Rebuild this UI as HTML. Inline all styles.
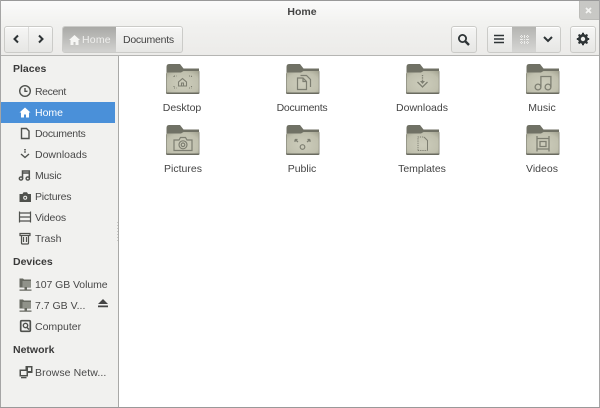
<!DOCTYPE html>
<html><head><meta charset="utf-8"><style>
*{box-sizing:border-box}
html,body{margin:0;padding:0;width:600px;height:408px;overflow:hidden;background:#fff}
body{font-family:"Liberation Sans",sans-serif;font-size:10.5px;color:#484848;position:relative}
.a{position:absolute}
.t{position:absolute;white-space:nowrap;line-height:14px}
.c{position:absolute;width:110px;text-align:center;line-height:14px;color:#444}
.btn{position:absolute;top:26px;height:27px;border:1px solid #cbcbc8;border-radius:3px;background:linear-gradient(#f6f6f5,#e6e6e4);box-shadow:0 1px 0 #fff inset}
.sep{position:absolute;top:27px;height:25px;width:1px;background:#dcdcda}
.act{position:absolute;top:27px;height:25px;background:linear-gradient(#a9a9a6,#d2d2d0)}
.h{position:absolute;left:13px;font-weight:bold;color:#3a3a3a;line-height:14px;font-size:10.5px}
svg{position:absolute;overflow:visible}
.i{filter:blur(.3px)}
</style></head><body>
<div class="a" style="left:0;top:0;width:600px;height:56px;background:linear-gradient(#fbfbfb 0,#f1f1ef 25px,#ecebe9 56px);border-bottom:1px solid #b5b5b3"></div>
<div class="a" style="left:0;top:0;width:600px;height:1px;background:#999"></div>
<div class="a" style="left:0;top:0;width:1px;height:408px;background:#a5a5a5"></div>
<div class="a" style="left:599px;top:0;width:1px;height:408px;background:#a5a5a5"></div>
<div class="a" style="left:0;top:407px;width:600px;height:1px;background:#999"></div>
<div class="t" style="left:2px;width:600px;text-align:center;top:5px;font-weight:bold;color:#444;font-size:10.5px">Home</div>
<div class="a" style="left:579px;top:1px;width:20px;height:19px;background:#c8c8c5;border-bottom-left-radius:3px;border-left:1px solid #bcbcb9;border-bottom:1px solid #bcbcb9"></div>
<svg class="i" style="left:0;top:0" width="600" height="56"><path d="M586 8l5 5M591 8l-5 5" stroke="#f4f4f2" stroke-width="1.800"/></svg>

<div class="btn" style="left:4px;width:49px"></div><div class="sep" style="left:28px"></div>
<svg class="i" style="left:0;top:0" width="60" height="56"><path d="M18 35.500l-3.500 3.500 3.500 3.500M39 35.500l3.500 3.500-3.500 3.500" fill="none" stroke="#2e3436" stroke-width="2"/></svg>

<div class="btn" style="left:62px;width:121px"></div>
<div class="act" style="left:63px;width:53px;border-radius:2px 0 0 2px"></div>
<svg class="i" style="left:69px;top:35px" width="11" height="10"><path d="M0 5L5.500 0 11 5 9.500 5 9.500 10 6.500 10 6.500 7 4.500 7 4.500 10 1.500 10 1.500 5Z" fill="#f6f6f4"/></svg>
<div class="t" style="left:82px;top:33px;color:#efefed;letter-spacing:.2px">Home</div>
<div class="t" style="left:123px;top:33px;color:#444;letter-spacing:-.25px">Documents</div>

<div class="btn" style="left:451px;width:26px"></div>
<svg class="i" style="left:457px;top:33px" width="14" height="14"><circle cx="5.500" cy="5.500" r="3.600" fill="none" stroke="#2e3436" stroke-width="1.800"/><path d="M8 8l4 4" stroke="#2e3436" stroke-width="2.400"/></svg>

<div class="btn" style="left:487px;width:74px"></div>
<div class="act" style="left:512px;width:24px;background:linear-gradient(#b4b4b1,#d6d6d4)"></div>
<svg class="i" style="left:0;top:0" width="600" height="56"><path d="M494 35.500h10M494 39h10M494 42.500h10" stroke="#2e3436" stroke-width="1.500"/><path d="M520 36.500h9M520 39.500h9M520 42.500h9M521.500 35v9M524.500 35v9M527.500 35v9" stroke="#eeeeec" stroke-width="1" stroke-dasharray="1 1"/><path d="M544 37l4 4 4-4" fill="none" stroke="#2e3436" stroke-width="2"/></svg>

<div class="btn" style="left:570px;width:26px"></div>
<svg class="i" style="left:576px;top:32px" width="14" height="14"><circle cx="7" cy="7" r="3.700" fill="none" stroke="#2e3436" stroke-width="2.600"/><path d="M7 .8v12.400M.8 7h12.400M2.600 2.600l8.800 8.800M11.400 2.600l-8.800 8.800" stroke="#2e3436" stroke-width="2"/><circle cx="7" cy="7" r="2.200" fill="#ededeb"/></svg>

<!-- sidebar -->
<div class="a" style="left:1px;top:56px;width:118px;height:351px;background:#f1f1ef;border-right:1px solid #a9a9a7"></div>
<div class="a" style="left:1px;top:102px;width:114px;height:21px;background:#4a90d9"></div>
<svg style="left:116px;top:222px" width="3" height="20"><path d="M1.500 0v20" stroke="#c8c8c6" stroke-dasharray="1 2"/></svg>

<div class="h" style="top:62px">Places</div>
<div class="t" style="left:35px;top:85px;letter-spacing:-.4px">Recent</div>
<div class="t" style="left:35px;top:106px;color:#fff">Home</div>
<div class="t" style="left:35px;top:127px;letter-spacing:-.3px">Documents</div>
<div class="t" style="left:35px;top:148px">Downloads</div>
<div class="t" style="left:35px;top:169px;letter-spacing:-.2px">Music</div>
<div class="t" style="left:35px;top:190px;letter-spacing:-.2px">Pictures</div>
<div class="t" style="left:35px;top:211px;letter-spacing:-.15px">Videos</div>
<div class="t" style="left:35px;top:232px">Trash</div>
<div class="h" style="top:255px">Devices</div>
<div class="t" style="left:35px;top:278px;letter-spacing:-.08px">107 GB Volume</div>
<div class="t" style="left:35px;top:299px">7.7 GB V...</div>
<div class="t" style="left:35px;top:320px">Computer</div>
<div class="h" style="top:343px">Network</div>
<div class="t" style="left:35px;top:366px;letter-spacing:.1px">Browse Netw...</div>

<svg class="i" style="left:0;top:0" width="120" height="408">
<g fill="none" stroke="#4f514d" stroke-width="1.400">
<circle cx="25" cy="91" r="5.300"/><path d="M25 88v3.300h2.500"/>
<path d="M21.500 128.500h5l2.500 2.500v7.500h-7.500z"/>
<path d="M25 149v4" stroke-width="1.600" stroke-dasharray="1.500 .7"/><path d="M21 154l4 3.500 4-3.500"/>
<path d="M22.500 178.500V171h6.800v7.500M22.500 173h6.800" stroke-width="1.500"/><ellipse cx="21" cy="178.500" rx="1.700" ry="1.600"/><ellipse cx="27.800" cy="178.500" rx="1.700" ry="1.600"/>
<path d="M19.500 211.500v11M30.500 211.500v11M19.500 213h11M19.500 221h11M19.500 217h11" stroke-width="1.200"/>
<path d="M21.500 235.500h7v7.500q0 1-1 1h-5q-1 0-1-1zM20 233.500h10v2H20zM23.500 237v5M26.500 237v5" stroke-width="1.200"/>
<rect x="20.700" y="320.700" width="9.600" height="10.600" rx="1" stroke-width="1.700"/><circle cx="25.500" cy="325.500" r="2.200"/><path d="M27 327.500l2 2"/>
</g>
<path d="M19.500 112.500l5.500-5 5.500 5h-1.500v5h-3v-3h-2v3h-3v-5z" fill="#fff"/>
<path d="M19.500 194h3l1-1.800h3.500l1 1.800h3v8h-11.500z" fill="#4f514d"/><circle cx="25.200" cy="197.800" r="2" fill="#f1f1ef"/><circle cx="25.200" cy="197.800" r="1" fill="#4f514d"/>
<g id="d1" fill="#676961"><path d="M19.500 278.500h3.500l1 1h7v8h-11.500z"/><path d="M22.500 281h8.500v6h-8.500z" fill="#90928a"/><path d="M24.500 287.500h2.500v2h-2.500zM19.500 289.500h12v1.200h-12z"/></g>
<use href="#d1" y="21"/>
<path d="M98 304l5-5 5 5zM98 305.500h10v1.800H98z" fill="#444"/>
<g fill="#4f514d"><path d="M25.500 366h7v7h-7z"/><path d="M19.500 369.500h8.500v7h-8.500z"/><path d="M21 371h5.500v4H21z" fill="#f1f1ef"/><path d="M28 367.500h3v3.500h-3z" fill="#f1f1ef"/><path d="M21 377h5.500v1.300H21z"/></g>
</svg>

<!-- folders -->
<svg width="0" height="0" style="left:0;top:0"><defs>
<radialGradient id="fb" cx=".5" cy=".55" r=".7"><stop offset="0" stop-color="#cdcdbc"/><stop offset=".7" stop-color="#c0c0ae"/><stop offset="1" stop-color="#a5a593"/></radialGradient>
<g id="f">
<path d="M.5 3Q.5 0 3 0h11l3.500 4.500H33v6H.5z" fill="#707165"/>
<path d="M0 9.500Q0 8.500 1.500 8.500H15l2.500-1.500H33.500v21.500q0 1.500-1.500 1.500H1.500Q0 30 0 28.500z" fill="url(#fb)"/>
<path d="M.4 9.500v19M33.100 7.500v21" stroke="#8d8e80" stroke-width=".8" fill="none"/>
<path d="M0 28.500h33.500v.3q0 1.200-1.500 1.200H1.500Q0 30 0 28.800z" fill="#6a6b60"/>
</g></defs></svg>

<svg class="i" style="left:166px;top:64px" width="34" height="31"><use href="#f"/><g fill="none" stroke="#7d7e71" stroke-width="1.100"><path d="M12.500 22v-4l4-3.500 4 3.500v4zM15.500 22v-3h2v3"/><path d="M8 12h2.500M23 12h2.500M8 24h2.500M23 24h2.500M8 12v2M25.500 12v2M8 22v2M25.500 22v2" stroke-dasharray="1 1"/></g></svg>
<svg class="i" style="left:286px;top:64px" width="34" height="31"><use href="#f"/><g fill="none" stroke="#7d7e71" stroke-width="1.200"><path d="M11.500 14h5.500l3.500 3.500v8h-9z"/><path d="M14.500 11.500h6l4 4v7.500"/><path d="M17 14v3.500h3.500"/></g></svg>
<svg class="i" style="left:406px;top:64px" width="34" height="31"><use href="#f"/><g fill="none" stroke="#7d7e71" stroke-width="1.300"><path d="M16.500 11v6" stroke-dasharray="1.300 1"/><path d="M11.500 18l5 5 5-5"/></g><path d="M14 17h5l-2.500 3z" fill="#7d7e71"/></svg>
<svg class="i" style="left:526px;top:64px" width="34" height="31"><use href="#f"/><g fill="none" stroke="#7d7e71" stroke-width="1.300"><circle cx="12" cy="23" r="2.900"/><circle cx="22" cy="23" r="2.900"/><path d="M14.900 23V12.500h10V23"/></g></svg>
<svg class="i" style="left:166px;top:125px" width="34" height="31"><use href="#f"/><g fill="none" stroke="#7d7e71" stroke-width="1.200"><path d="M8 15h5l1.500-2.500h5L21 15h5v10.500H8z"/><circle cx="17" cy="19.800" r="4"/><circle cx="17" cy="19.800" r="1.800"/></g></svg>
<svg class="i" style="left:286px;top:125px" width="34" height="31"><use href="#f"/><g fill="none" stroke="#7d7e71" stroke-width="1.200"><circle cx="16.500" cy="22" r="2.300"/><path d="M9 14.500l3 2.500M9 14.500h2.500M9 14.500v2.500M24 14.500l-3 2.500M24 14.500h-2.500M24 14.500v2.500"/></g></svg>
<svg class="i" style="left:406px;top:125px" width="34" height="31"><use href="#f"/><g fill="none" stroke="#7d7e71" stroke-width="1"><path d="M12 25.500v-13.500h6" stroke-dasharray="1.200 1"/><path d="M12 25.500h9.500" stroke-dasharray="1.200 1"/><path d="M18 12l3.500 3.500v10"/></g></svg>
<svg class="i" style="left:526px;top:125px" width="34" height="31"><use href="#f"/><g fill="none" stroke="#7d7e71" stroke-width="1.300"><path d="M11 11v15.500M23 11v15.500M11 13.500h12M11 24h12M14 16.500h6v5h-6z"/></g></svg>

<div class="c" style="left:127px;top:101px">Desktop</div>
<div class="c" style="left:247px;top:101px;letter-spacing:-.25px">Documents</div>
<div class="c" style="left:367px;top:101px">Downloads</div>
<div class="c" style="left:487px;top:101px">Music</div>
<div class="c" style="left:128px;top:162px">Pictures</div>
<div class="c" style="left:247px;top:162px">Public</div>
<div class="c" style="left:367px;top:162px">Templates</div>
<div class="c" style="left:487px;top:162px">Videos</div>
</body></html>
